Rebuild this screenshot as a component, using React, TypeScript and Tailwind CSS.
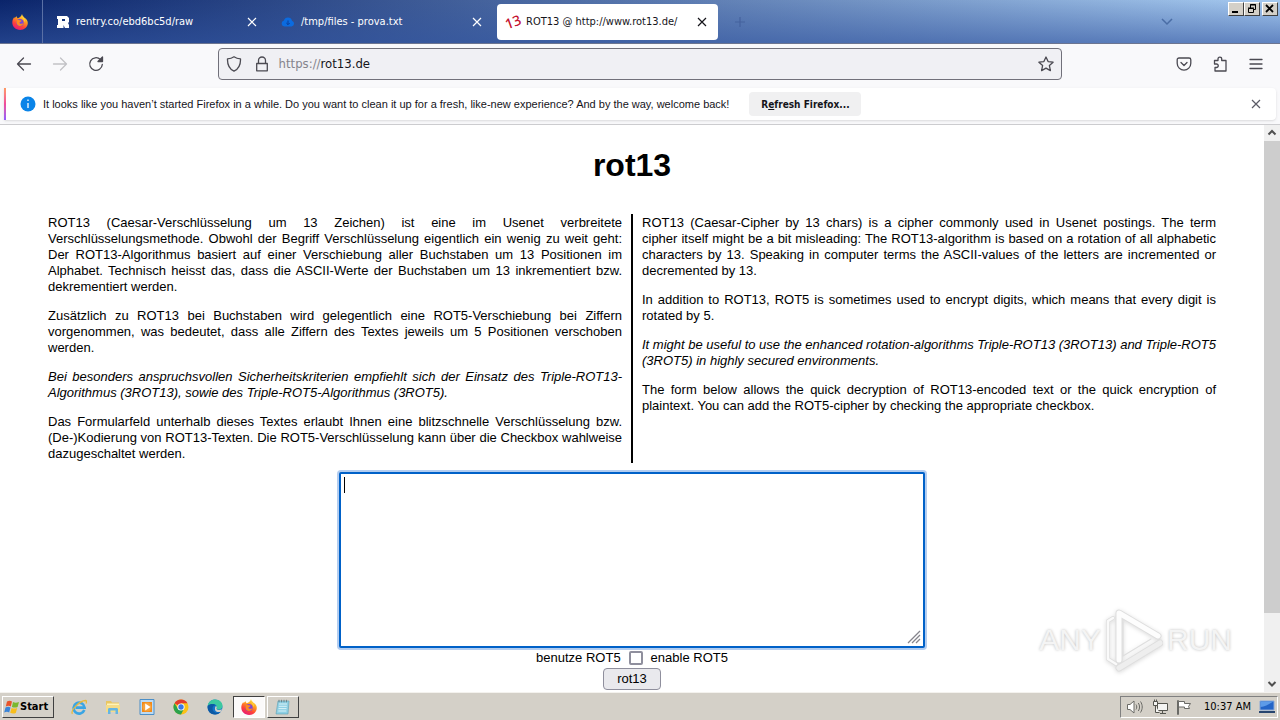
import type { ReactNode } from 'react';
import { clsx } from 'clsx';

const TABS = [
  { title: 'rentry.co/ebd6bc5d/raw', icon: <RentryIcon />, active: false },
  { title: '/tmp/files - prova.txt', icon: <CloudIcon />, active: false },
  { title: 'ROT13 @ http://www.rot13.de/', icon: <Rot13Icon />, active: true },
];

const GERMAN = [
  { text: 'ROT13 (Caesar-Verschlüsselung um 13 Zeichen) ist eine im Usenet verbreitete Verschlüsselungsmethode. Obwohl der Begriff Verschlüsselung eigentlich ein wenig zu weit geht: Der ROT13-Algorithmus basiert auf einer Verschiebung aller Buchstaben um 13 Positionen im Alphabet. Technisch heisst das, dass die ASCII-Werte der Buchstaben um 13 inkrementiert bzw. dekrementiert werden.' },
  { text: 'Zusätzlich zu ROT13 bei Buchstaben wird gelegentlich eine ROT5-Verschiebung bei Ziffern vorgenommen, was bedeutet, dass alle Ziffern des Textes jeweils um 5 Positionen verschoben werden.' },
  { text: 'Bei besonders anspruchsvollen Sicherheitskriterien empfiehlt sich der Einsatz des Triple-ROT13-Algorithmus (3ROT13), sowie des Triple-ROT5-Algorithmus (3ROT5).', italic: true },
  { text: 'Das Formularfeld unterhalb dieses Textes erlaubt Ihnen eine blitzschnelle Verschlüsselung bzw. (De-)Kodierung von ROT13-Texten. Die ROT5-Verschlüsselung kann über die Checkbox wahlweise dazugeschaltet werden.' },
];

const ENGLISH = [
  { text: 'ROT13 (Caesar-Cipher by 13 chars) is a cipher commonly used in Usenet postings. The term cipher itself might be a bit misleading: The ROT13-algorithm is based on a rotation of all alphabetic characters by 13. Speaking in computer terms the ASCII-values of the letters are incremented or decremented by 13.' },
  { text: 'In addition to ROT13, ROT5 is sometimes used to encrypt digits, which means that every digit is rotated by 5.' },
  { text: 'It might be useful to use the enhanced rotation-algorithms Triple-ROT13 (3ROT13) and Triple-ROT5 (3ROT5) in highly secured environments.', italic: true },
  { text: 'The form below allows the quick decryption of ROT13-encoded text or the quick encryption of plaintext. You can add the ROT5-cipher by checking the appropriate checkbox.' },
];

/* Icons */

function Cross({ className }: { className?: string }) {
  return (
    <svg viewBox="0 0 10 10" className={clsx('size-[10px]', className)} fill="none" stroke="currentColor" strokeWidth="1.2">
      <path d="M1 1l8 8M9 1l-8 8" />
    </svg>
  );
}

function FirefoxIcon({ id }: { id: string }) {
  return (
    <svg viewBox="0 0 16 16" className="size-4">
      <defs>
        <linearGradient id={id} x1="0.8" y1="0" x2="0.3" y2="1">
          <stop offset="0" stopColor="#fff04a" />
          <stop offset="0.35" stopColor="#ffa51f" />
          <stop offset="0.7" stopColor="#ff4238" />
          <stop offset="1" stopColor="#e5187b" />
        </linearGradient>
      </defs>
      <path d="M10 0c.2 1.700 1.300 2.400 2.500 3.700C14.600 5 15.800 6.600 15.800 9c0 4-3.500 7-7.700 7C3.700 16 .3 12.800.3 8.600c0-2.400.8-4.300 2-5.700l.3 1.400C3.300 3.200 4 2.600 4.700 2.300c0 .9.300 1.400.9 1.900C7.500 3.900 9.600 2.200 10 0z" fill={`url(#${id})`} />
      <circle cx="8" cy="8.700" r="3.600" fill="#7a45d8" />
      <path d="M4.600 6.200c1-.8 2.200-.7 3.200.1 1 0 1.700.2 1.800.6-.6.900-1.500.8-2 1.300-.2.900.4 1.600 1.400 1.600 1 0 1.500-.7 2.300-.3-.5 1.600-2 2.500-3.600 2.400-2.200-.2-3.700-2.400-3.100-5.700z" fill="#ff8a1e" />
      <path d="M9.500 3.300c1.900 1 3 2.800 2.800 5 1-1.600.5-4.200-2.800-5z" fill="#ffe24a" />
    </svg>
  );
}

function RentryIcon() {
  return (
    <svg viewBox="0 0 12 12" className="size-3">
      <path d="M0 0h10l2 2v4l-1 1 1 2v3H8L6.500 9v3H0V9h1V3H0z" fill="#fff" />
      <path d="M5 3h3v2H5z" fill="#17357a" />
    </svg>
  );
}

function CloudIcon() {
  return (
    <svg viewBox="0 0 14 12" className="h-3 w-[14px]">
      <path d="M3.500 10.500a3 3 0 0 1-.6-5.900A4.200 4.200 0 0 1 11 4.700a3 3 0 0 1-.4 5.800z" fill="#0b6be0" />
      <path d="M7 4.500v4M5.300 7L7 8.700 8.700 7" stroke="#0a3f9c" fill="none" />
    </svg>
  );
}

function Rot13Icon() {
  return (
    <span className="-rotate-20 font-['Noto_Sans',sans-serif] text-[14px] leading-4 font-medium text-[#c4122f]">13</span>
  );
}

function ToolIcon({ children, className }: { children: ReactNode; className?: string }) {
  return (
    <svg viewBox="0 0 16 16" className={clsx('size-4', className)} fill="none" stroke="currentColor" strokeWidth="1.3" strokeLinecap="round" strokeLinejoin="round">
      {children}
    </svg>
  );
}

function WindowsFlag() {
  return (
    <svg viewBox="0 0 16 16" className="size-4">
      <path d="M3 2.500c2-1 3.500-.8 5 0L6.800 7.400c-1.500-.8-3-.9-5 0z" fill="#e8532a" />
      <path d="M9 3c1.700.8 3.500.9 6 0l-1.400 5c-2 .9-3.800.7-5.700-.1z" fill="#7ab82e" />
      <path d="M1.500 8.400c2-.9 3.500-.8 5 0l-1.300 5c-1.600-.9-3-.9-5 0z" fill="#3a84d8" />
      <path d="M7.600 8.900c1.700.8 3.500.9 5.600.1l-1.400 4.900c-2 .9-3.700.8-5.600-.1z" fill="#f8be1c" />
    </svg>
  );
}

function IeIcon() {
  return (
    <svg viewBox="0 0 16 16" className="size-4" fill="none">
      <path d="M13.300 11A5.500 5.500 0 1 1 13.600 8.600H4.500" stroke="#3aa5e4" strokeWidth="2.600" />
      <path d="M1.500 14.800C-1 12 8.500 1.600 14.500 1.500c1.500.2 1 2 .5 3" stroke="#e9b93a" strokeWidth="1.300" />
    </svg>
  );
}

function FolderIcon() {
  return (
    <svg viewBox="0 0 16 16" className="size-4">
      <path d="M1 2h5l1 1.500h7V12H1z" fill="#e9c662" />
      <path d="M2 4.500h12V9H2z" fill="#fff3b8" />
      <path d="M1 6h14v7H1z" fill="#f5dc88" />
      <path d="M3 15v-4.500c0-1.200.8-1.500 2-1.500h6c1.200 0 2 .3 2 1.500V15h-2.500v-3.500h-5V15z" fill="#65b5e2" />
    </svg>
  );
}

function MediaIcon() {
  return (
    <svg viewBox="0 0 16 16" className="size-4">
      <path d="M1 .5h14v15H1z" fill="#bcdaf3" stroke="#4c8fc7" />
      <path d="M3 3h10v10H3z" fill="#f28a19" />
      <circle cx="8" cy="8" r="4.500" fill="#f6a23c" />
      <path d="M6.200 4.600L11.500 8l-5.300 3.400z" fill="#fff" />
    </svg>
  );
}

function ChromeIcon() {
  return (
    <svg viewBox="0 0 16 16" className="size-4">
      <circle cx="8" cy="8" r="7.500" fill="#fbc116" />
      <path d="M8 8L1.500 4.200A7.500 7.500 0 0 1 14.500 4.200H8z" fill="#e33b2e" />
      <path d="M1.500 4.200A7.500 7.500 0 0 0 8 15.500l3-5.700L8 8 5 9.800z" fill="#2ba24c" />
      <circle cx="8" cy="8" r="3.600" fill="#fff" />
      <circle cx="8" cy="8" r="2.700" fill="#3b78e7" />
    </svg>
  );
}

function EdgeIcon() {
  return (
    <svg viewBox="0 0 16 16" className="size-4">
      <circle cx="8" cy="8" r="7.500" fill="#1473c8" />
      <path d="M.7 7C1.200 3 4.200.5 8 .5c4.500 0 7.500 3 7.500 6.200 0 2.600-2 3.900-4.200 3.900-1.700 0-2.300-.8-1.700-1.500C11 6 6 2.800.7 7z" fill="#3cc8a0" />
      <path d="M.7 7C3 4.600 7 4.400 8.500 6.500 6 6 4.800 9 6 11.500c1.300 2.500 4.500 3 7.500 1.500-3 3.800-9.500 3-11.800-.8C.8 10.600.4 8.700.7 7z" fill="#0c59a4" />
      <path d="M9.600 9.100c-.6.800.3 1.800 2 1.800 1.600 0 2.500-.3 3.400-1l-.8 2.500c-2.600 1.300-5.800.6-6.200-2-.2-1.500.2-2.700 1-3.400.8.6 1.100 1.300.6 2.100z" fill="#d4d0c8" />
    </svg>
  );
}

function NotepadIcon() {
  return (
    <svg viewBox="0 0 16 16" className="size-4">
      <path d="M3 2h11l-1 13H1z" fill="#8fd0e4" stroke="#5c9fb3" strokeWidth=".6" />
      <path d="M4 5h8M3.800 7.300h8M3.500 9.600h8M3.300 12h8" stroke="#d9f2f8" />
      <path d="M4 .8v2.500M6.500.8v2.500M9 .8v2.500M11.500.8v2.500" stroke="#66777c" strokeWidth=".8" />
    </svg>
  );
}

/* Browser window */

function CaptionButton({ label, children }: { label: string; children: ReactNode }) {
  return (
    <button
      aria-label={label}
      className="flex h-[14px] w-4 items-center justify-center border border-t-white border-r-[#404040] border-b-[#404040] border-l-white bg-[#d4d0c8] text-black"
    >
      {children}
    </button>
  );
}

function TabBar() {
  return (
    <div className="relative flex h-11 shrink-0 items-center border-b border-[#6c7590] bg-[linear-gradient(to_bottom,rgba(50,85,160,0)_0%,rgba(50,85,160,0.6)_100%),linear-gradient(to_right,#0a246a,#a6caf0)] font-['DejaVu_Sans_Condensed','DejaVu_Sans',sans-serif] text-[11px]">
      <div className="mr-[2px] flex h-full w-[43px] items-center justify-center border-r border-[#5a70a5] pr-[2px]">
        <FirefoxIcon id="fx-tab" />
      </div>
      {TABS.map((tab) => (
        <div
          key={tab.title}
          className={clsx(
            'mx-[2px] flex h-9 w-[221px] items-center rounded pr-[11px] pl-2',
            tab.active ? 'bg-white text-[#15141a]' : 'text-white'
          )}
        >
          <span className="flex w-4 shrink-0 items-center justify-center">{tab.icon}</span>
          <span className="min-w-0 flex-1 pt-[2px] pl-[5px] whitespace-nowrap">{tab.title}</span>
          <button aria-label="Close tab">
            <Cross />
          </button>
        </div>
      ))}
      <button aria-label="New tab" className="ml-[14px] text-[#45629e]">
        <svg viewBox="0 0 12 12" className="size-3" stroke="currentColor" strokeWidth="1.200">
          <path d="M6 1v10M1 6h10" />
        </svg>
      </button>
      <button aria-label="List all tabs" className="mr-[107px] ml-auto text-[#4a6da5]">
        <svg viewBox="0 0 12 8" className="h-2 w-3" fill="none" stroke="currentColor" strokeWidth="1.500">
          <path d="M1 1l5 5 5-5" />
        </svg>
      </button>
      <div className="absolute top-[2px] right-[2px] flex">
        <CaptionButton label="Minimize">
          <svg viewBox="0 0 10 10" className="size-[10px]"><path d="M1 7h6v2H1z" /></svg>
        </CaptionButton>
        <CaptionButton label="Restore">
          <svg viewBox="0 0 10 10" className="size-[10px]" fill="none" stroke="currentColor">
            <path d="M3.500 4V.5h5v5H7M3 1h6M1.500 4.500h5v4h-5zM1 4h6" />
          </svg>
        </CaptionButton>
        <span className="w-[2px]" />
        <CaptionButton label="Close">
          <svg viewBox="0 0 10 10" className="size-[10px]" stroke="currentColor" strokeWidth="1.800"><path d="M1 1l7 7M8 1L1 8" /></svg>
        </CaptionButton>
      </div>
    </div>
  );
}

function NavBar() {
  return (
    <div className="flex h-11 shrink-0 items-center bg-[#f9f9fb] pb-1 text-[#4b4a52]">
      <div className="flex w-[114px] shrink-0 gap-5 pl-4">
        <button aria-label="Back"><ToolIcon><path d="M1.500 8h13M7.500 2l-6 6 6 6" /></ToolIcon></button>
        <button aria-label="Forward" className="text-[#c2c2c6]"><ToolIcon><path d="M1.500 8h13M8.500 2l6 6-6 6" /></ToolIcon></button>
        <button aria-label="Reload"><ToolIcon><path d="M14.300 8.500a6.300 6.300 0 1 1-1.900-5l1.800 1.700" /><path d="M14.500 1v4.500H10z" fill="currentColor" /></ToolIcon></button>
      </div>
      <div className="flex-1" />
      <div className="flex h-8 flex-[8] items-center rounded border border-[#71707a] bg-[#f0f0f4] px-[7px]">
        <ToolIcon><path d="M8 .8c2 1.500 4.500 2 6.500 2 .2 5-1.500 10-6.500 12.400C3 12.800 1.300 7.800 1.500 2.800c2 0 4.500-.5 6.500-2z" /></ToolIcon>
        <ToolIcon className="mr-[9px] ml-3"><path d="M2.700 7.500h10.600v7.300H2.700zM4.500 7.300V4.500a3.500 3.500 0 0 1 7 0v2.800" /></ToolIcon>
        <div className="relative min-w-0 flex-1">
          <input
            aria-label="Address"
            defaultValue="https://rot13.de"
            className="w-full bg-transparent font-['DejaVu_Sans_Condensed','DejaVu_Sans',sans-serif] text-[13px] text-transparent outline-none"
          />
          <span aria-hidden className="pointer-events-none absolute inset-0 flex items-center font-['DejaVu_Sans_Condensed','DejaVu_Sans',sans-serif] text-[13px] text-[#85848c]">
            https://<span className="text-[#15141a]">rot13.de</span>
          </span>
        </div>
        <button aria-label="Bookmark this page">
          <ToolIcon><path d="M8 1l2.100 4.600 5 .6-3.700 3.400 1 5L8 12.100l-4.400 2.500 1-5L.9 6.200l5-.6z" /></ToolIcon>
        </button>
      </div>
      <div className="flex-1" />
      <div className="flex w-[114px] shrink-0 gap-5 pl-[10px]">
        <button aria-label="Save to Pocket"><ToolIcon><path d="M3 2h10a1.800 1.800 0 0 1 1.800 1.800v3.500a6.800 6.800 0 0 1-13.600 0V3.800A1.800 1.800 0 0 1 3 2zM5 6.500l3 3 3-3" /></ToolIcon></button>
        <button aria-label="Extensions"><ToolIcon><path d="M6 4.500V3a1.800 1.800 0 0 1 3.700 0v1.500H14V15H3v-3.500h1.500a1.500 1.500 0 0 0 0-3.500H2.500V4.500z" /></ToolIcon></button>
        <button aria-label="Menu"><ToolIcon><path d="M2 3.500h12M2 8h12M2 12.500h12" /></ToolIcon></button>
      </div>
    </div>
  );
}

function NotificationBar() {
  return (
    <div className="shrink-0 border-b border-[#cccccf] bg-[#f9f9fb] px-1 pb-1">
      <div className="flex h-8 items-stretch rounded-r bg-white text-[11px] text-[#15141a] shadow-sm">
        <span className="w-[2px] bg-linear-to-b from-[#ff9a62] via-[#f04a9a] to-[#9059ff]" />
        <div className="flex flex-1 items-center pr-[15px] pl-[14px]">
          <svg viewBox="0 0 16 16" className="mr-[7px] size-4 shrink-0">
            <circle cx="8" cy="8" r="7.500" fill="#0a84e8" />
            <path d="M8 3.500v1.600M8 7v5" stroke="#fff" strokeWidth="1.300" />
          </svg>
          <span className="font-['Liberation_Sans',Arial,sans-serif] whitespace-nowrap">
            It looks like you haven’t started Firefox in a while. Do you want to clean it up for a fresh, like-new experience? And by the way, welcome back!
          </span>
          <button className="ml-5 h-6 w-28 shrink-0 rounded bg-[#f0f0f1] font-['DejaVu_Sans_Condensed','DejaVu_Sans',sans-serif] text-[10px] font-bold whitespace-nowrap">
            R<u>e</u>fresh Firefox...
          </button>
          <button aria-label="Dismiss" className="ml-auto text-[#5b5b66]">
            <Cross />
          </button>
        </div>
      </div>
    </div>
  );
}

function Column({ paragraphs, lang }: { paragraphs: { text: string; italic?: boolean }[]; lang: string }) {
  return (
    <div lang={lang} className="flex flex-1 basis-0 flex-col gap-[13px] py-px text-justify">
      {paragraphs.map((p) => (
        <p key={p.text} className={clsx(p.italic && 'italic')}>
          {p.text}
        </p>
      ))}
    </div>
  );
}

function Watermark() {
  return (
    <div className="pointer-events-none absolute right-8 bottom-5 flex items-center font-['Liberation_Sans',sans-serif] text-[30px] leading-none text-[#f4f4f4] [text-shadow:0_0_3px_#bbb]">
      <span>ANY</span>
      <svg viewBox="0 0 58 64" className="mx-1 h-16 w-[58px] drop-shadow-sm" fill="none" strokeLinejoin="round" strokeLinecap="round">
        <path d="M8 10l-5 3v38l8 5" stroke="#dedede" strokeWidth="4" />
        <path d="M8 10l-5 3v38l8 5" stroke="#fafafa" strokeWidth="2.500" />
        <path d="M14 52V5l39 23M14 60l41-25" stroke="#dedede" strokeWidth="7" />
        <path d="M14 52V5l39 23" stroke="#fdfdfd" strokeWidth="5" />
        <path d="M14 60l41-25" stroke="#eeeeee" strokeWidth="5" />
        <path d="M18 14v34l28-17" stroke="#dedede" strokeWidth="1.200" />
      </svg>
      <span>RUN</span>
    </div>
  );
}

function RotPage() {
  return (
    <main className="relative min-w-0 flex-1 overflow-hidden px-12 pt-[22px] font-['Liberation_Sans',Arial,sans-serif] text-[13px] leading-4 text-black">
      <h1 className="mb-[31px] text-center text-[32px] leading-9 font-bold">rot13</h1>
      <div className="flex gap-[9px]">
        <Column paragraphs={GERMAN} lang="de" />
        <div className="w-[2px] bg-black" />
        <Column paragraphs={ENGLISH} lang="en" />
      </div>
      <form className="mt-[9px] flex flex-col items-center" onSubmit={(e) => e.preventDefault()}>
        <div className="relative w-full max-w-[586px]">
          <textarea
            aria-label="Text"
            className="block h-44 w-full resize-none rounded-xs border-2 border-[#0061c8] bg-white p-1 ring-2 ring-[#b3cdf0] outline-none"
          />
          <span className="absolute top-[5px] left-[5px] h-4 w-px bg-black" />
          <svg viewBox="0 0 14 14" className="absolute right-1 bottom-1 size-[14px]" stroke="#85848c" strokeWidth="1.300">
            <path d="M1 13L13 1M5 13l8-8M9 13l4-4" />
          </svg>
        </div>
        <div className="flex h-5 items-center">
          <label htmlFor="rot5">benutze ROT5</label>
          <input
            id="rot5"
            type="checkbox"
            className="mx-2 size-[14px] appearance-none rounded-xs border-2 border-[#8f8f9d] bg-white checked:bg-[#0061c8]"
          />
          <label htmlFor="rot5">enable ROT5</label>
        </div>
        <button className="h-[22px] w-[58px] rounded border border-[#8f8f9d] bg-[#e9e9ed]">rot13</button>
      </form>
      <Watermark />
    </main>
  );
}

function ScrollBar() {
  return (
    <div className="flex w-4 shrink-0 flex-col items-center bg-[#f0f0f0] text-[#505050]">
      <svg viewBox="0 0 16 16" className="size-4 shrink-0" fill="none" stroke="currentColor" strokeWidth="2">
        <path d="M4.500 9.500L8 6l3.500 3.500" />
      </svg>
      <div className="w-full flex-[471] bg-[#cdcdcd]" />
      <div className="flex-[63]" />
      <svg viewBox="0 0 16 16" className="size-4 shrink-0" fill="none" stroke="currentColor" strokeWidth="2">
        <path d="M4.500 6L8 9.500 11.500 6" />
      </svg>
    </div>
  );
}

/* Taskbar */

function TaskBar() {
  return (
    <div className="flex h-7 shrink-0 items-center border-t border-[#f4f2ee] bg-[#d4d0c8] pt-[2px] pr-[2px] pb-px pl-[2px] font-['DejaVu_Sans_Condensed','DejaVu_Sans',sans-serif] text-[11px] text-black">
      <button className="flex h-[22px] w-[52px] items-center border border-t-white border-r-[#404040] border-b-[#404040] border-l-white pl-px font-bold">
        <WindowsFlag />
        Start
      </button>
      <div className="flex gap-[18px] pr-[10px] pl-[17px]">
        <button aria-label="Internet Explorer"><IeIcon /></button>
        <button aria-label="Explorer"><FolderIcon /></button>
        <button aria-label="Media Player"><MediaIcon /></button>
        <button aria-label="Chrome"><ChromeIcon /></button>
        <button aria-label="Edge"><EdgeIcon /></button>
      </div>
      <button aria-label="Firefox" className="flex h-[22px] w-8 items-center justify-center border border-t-[#404040] border-r-white border-b-white border-l-[#404040] bg-[#fbfafa]">
        <FirefoxIcon id="fx-task" />
      </button>
      <button aria-label="Notepad" className="ml-[2px] flex h-[22px] w-8 items-center justify-center border border-t-white border-r-[#404040] border-b-[#404040] border-l-white">
        <NotepadIcon />
      </button>
      <div className="ml-auto flex h-[22px] items-center gap-2 border border-t-[#808080] border-r-white border-b-white border-l-[#808080] pr-[2px] pl-[5px]">
        <svg viewBox="0 0 18 16" className="h-4 w-[18px]" fill="#fff" stroke="#6a6a66">
          <path d="M1.500 5.500H4L8 2v12l-4-3.500H1.500z" />
          <path d="M10 5.500c1 1.500 1 3.500 0 5M12.300 4c1.700 2.500 1.700 5.500 0 8M14.500 2.500c2.300 3.500 2.300 7.500 0 11" fill="none" />
        </svg>
        <svg viewBox="0 0 16 16" className="size-4" fill="#f4f4f2" stroke="#55554f">
          <path d="M5.500 4.500h10v7h-10zM8 14.500h6M10.500 12v2" />
          <path d="M1.500 2.500h4v4h-4zM2.500.5v2M4.500.5v2M3.500 6.500v7h4" />
        </svg>
        <svg viewBox="0 0 16 16" className="size-4" fill="#fff" stroke="#6a6a66">
          <path d="M1.500 1.500h1v14h-1z" />
          <path d="M2.500 2.500h6v2h6l-2 3 1 2h-5v-1.500h-6z" />
        </svg>
        <span className="pl-1 whitespace-nowrap">10:37 AM</span>
        <svg viewBox="0 0 16 14" className="h-[14px] w-4">
          <path d="M1 1h14v9H1z" fill="#2465c7" stroke="#8aa9d6" />
          <path d="M1.500 7C6 7 10 4 14.500 1.500h-13z" fill="#5d9be8" />
          <path d="M0 11h16v2H0z" fill="#27456f" />
        </svg>
      </div>
    </div>
  );
}

export default function App() {
  return (
    <div className="flex h-screen flex-col overflow-hidden bg-white">
      <TabBar />
      <NavBar />
      <NotificationBar />
      <div className="flex min-h-0 flex-1">
        <RotPage />
        <ScrollBar />
      </div>
      <TaskBar />
    </div>
  );
}
